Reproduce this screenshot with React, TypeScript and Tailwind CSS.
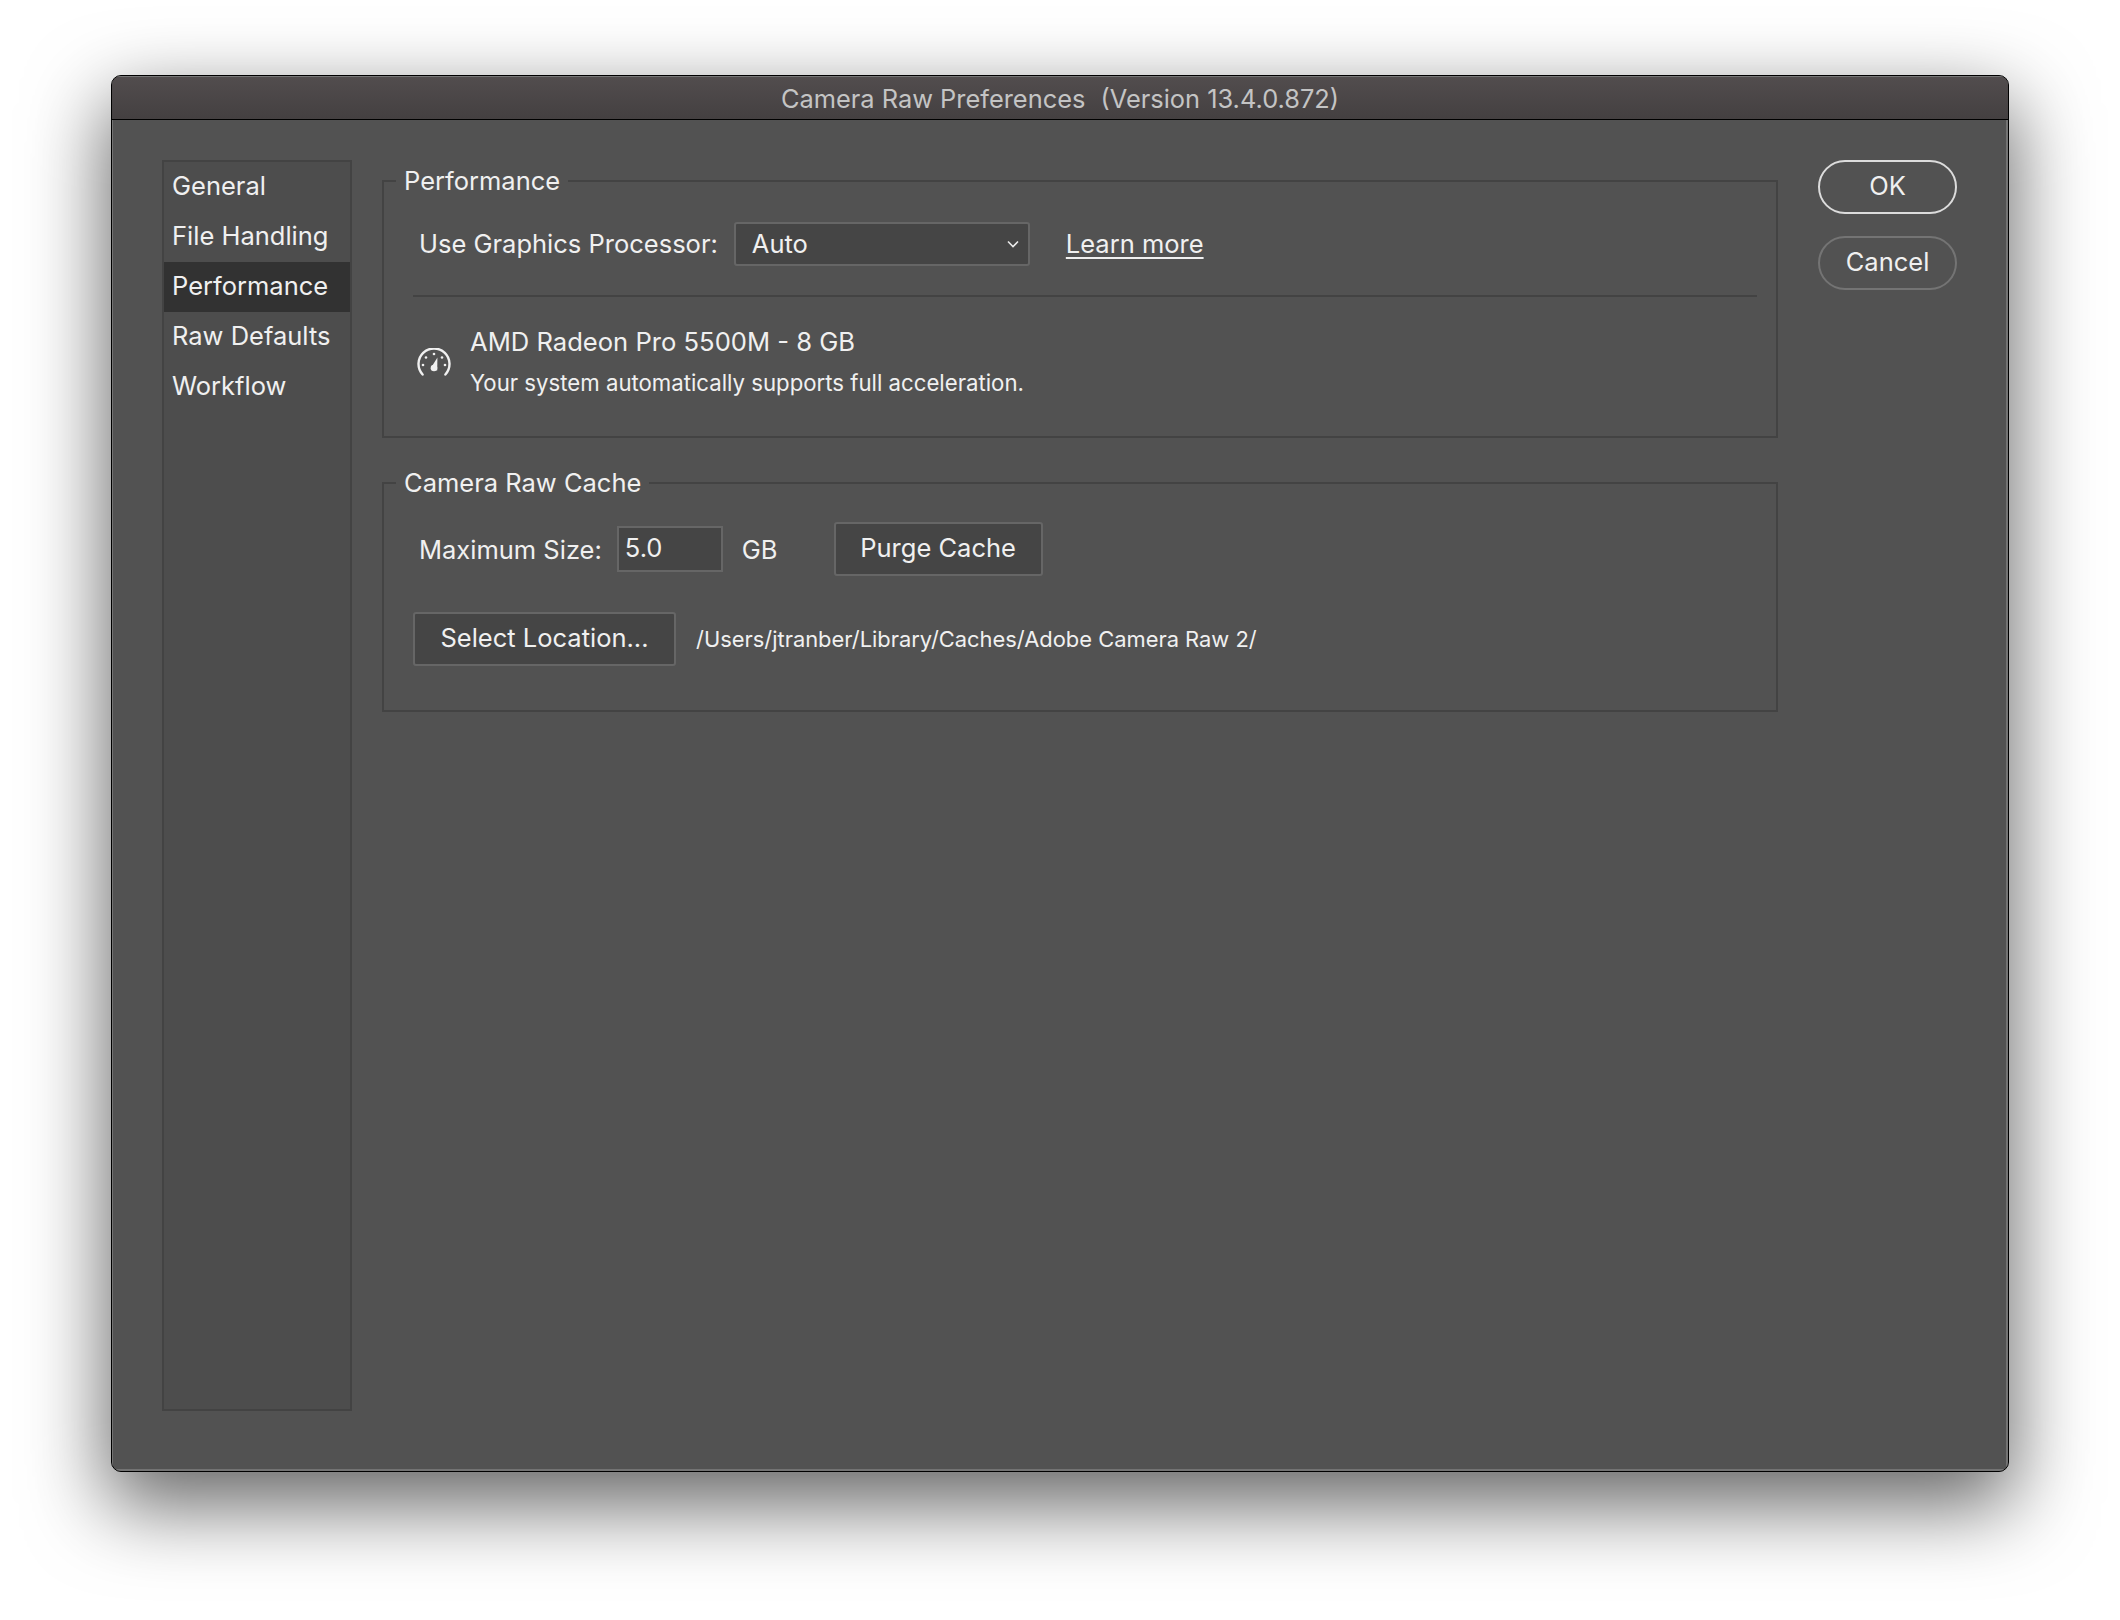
const font = "font-['Inter','Noto_Sans',sans-serif]";

const navItems = ["General", "File Handling", "Performance", "Raw Defaults", "Workflow"];

export default function App() {
  return (
    <div className={`h-[1620px] w-[2120px] overflow-hidden bg-white pl-[111px] pt-[75px] ${font} text-[#f0f0f0]`}>
      <div className="flex h-[1397px] w-[1898px] flex-col overflow-hidden rounded-[10px] border border-black bg-[#525252] shadow-[0_30px_80px_4px_rgba(0,0,0,0.6)]">
        <TitleBar />
        <div className="flex min-h-0 flex-1 pl-[50px] pt-[40px] shadow-[inset_1px_0_0_#737373,inset_-2px_0_0_#737373,inset_0_-2px_0_#737373]">
          <Sidebar />
          <main className="ml-[30px] flex w-[1396px] flex-col gap-[26px] pt-[2px]">
            <PerformanceGroup />
            <CacheGroup />
          </main>
          <div className="ml-[40px] flex w-[139px] flex-col gap-[22px]">
            <button className="h-[54px] rounded-full border-2 border-[#dcdcdc] pb-[1px] text-[25.5px]">OK</button>
            <button className="h-[54px] rounded-full border-2 border-[#747474] pb-[1px] text-[25.5px]">Cancel</button>
          </div>
        </div>
      </div>
    </div>
  );
}

function TitleBar() {
  return (
    <div className="flex h-[44px] shrink-0 items-center justify-center border-b border-black bg-gradient-to-b from-[#524d4e] to-[#444041] pt-[3px] text-[25.4px] text-[#c4c4c4] shadow-[inset_0_1px_0_#777]">
      <span className="mr-[15px]">Camera Raw Preferences</span>
      <span>(Version 13.4.0.872)</span>
    </div>
  );
}

function Sidebar() {
  return (
    <nav className="h-[1251px] w-[190px] border-2 border-[#434343] bg-[#4d4d4d]">
      {navItems.map((item) => (
        <div
          key={item}
          className={`flex h-[50px] items-center pb-[1px] pl-[8px] text-[25.5px] ${item === "Performance" ? "bg-[#323232]" : ""}`}
        >
          {item}
        </div>
      ))}
    </nav>
  );
}

function Group({ title, height, children }: { title: string; height: string; children: React.ReactNode }) {
  return (
    <fieldset className={`border-2 border-[#434343] ${height}`}>
      <legend className="ml-[12px] h-[38px] px-[8px] text-[25.5px] leading-[38px]">{title}</legend>
      {children}
    </fieldset>
  );
}

function PerformanceGroup() {
  return (
    <Group title="Performance" height="h-[276px]">
      <div className="flex items-center pl-[35px] pt-[22px]">
        <span className="mr-[16px] text-[25.5px]">Use Graphics Processor:</span>
        <div className="flex h-[44px] w-[296px] items-center justify-between rounded-[3px] border-2 border-[#666] bg-[#454545] pl-[16px] pr-[8px] text-[25.5px]">
          Auto
          <svg width="14" height="10" viewBox="0 0 14 10" fill="none" stroke="#e8e8e8" strokeWidth="1.6">
            <path d="M2 2.5 7 7.5 12 2.5" />
          </svg>
        </div>
        <a className="ml-[36px] text-[25.5px] underline underline-offset-[4px]">Learn more</a>
      </div>
      <div className="ml-[29px] mr-[19px] mt-[29px] h-[2px] bg-[#434343]" />
      <div className="flex items-center pl-[33px] pt-[29px]">
        <GaugeIcon />
        <div className="ml-[19px]">
          <div className="text-[25.6px] leading-[32px]">AMD Radeon Pro 5500M - 8 GB</div>
          <div className="mt-[10px] text-[22.2px] leading-[30px]">Your system automatically supports full acceleration.</div>
        </div>
      </div>
    </Group>
  );
}

function CacheGroup() {
  return (
    <Group title="Camera Raw Cache" height="h-[248px]">
      <div className="flex items-center pl-[35px] pt-[20px]">
        <span className="pt-[2px] text-[25.5px]">Maximum Size:</span>
        <div className="ml-[15px] flex h-[46px] w-[106px] items-center border-2 border-[#666] bg-[#454545] pb-[2px] pl-[6px] text-[25.5px]">5.0</div>
        <span className="ml-[19px] pt-[2px] text-[25.5px]">GB</span>
        <DialogButton className="ml-[56px] w-[209px]">Purge Cache</DialogButton>
      </div>
      <div className="flex items-center pl-[29px] pt-[36px]">
        <DialogButton className="w-[263px]">Select Location...</DialogButton>
        <span className="ml-[20px] text-[21.9px]">/Users/jtranber/Library/Caches/Adobe Camera Raw 2/</span>
      </div>
    </Group>
  );
}

function DialogButton({ className, children }: { className: string; children: React.ReactNode }) {
  return (
    <button className={`h-[54px] rounded-[3px] border-2 border-[#666] bg-[#454545] pb-[2px] text-[25.5px] ${className}`}>
      {children}
    </button>
  );
}

function GaugeIcon() {
  return (
    <svg width="34" height="28" viewBox="0 0 34 28" fill="none" stroke="#f0f0f0" strokeWidth="2.4" strokeLinecap="round">
      <path d="M5.6 26.5A15.5 15.5 0 1 1 28.4 26.5" />
      <path d="M13.6 20.5 20.4 9.5 20.2 22.5Z" fill="#f0f0f0" stroke="none" />
      <circle cx="17" cy="20" r="3.3" fill="#f0f0f0" stroke="none" />
      <g fill="#f0f0f0" stroke="none">
        <circle cx="6" cy="17" r="1.3" />
        <circle cx="9" cy="9.5" r="1.3" />
        <circle cx="17" cy="6" r="1.3" />
        <circle cx="25" cy="9.5" r="1.3" />
        <circle cx="28" cy="17" r="1.3" />
      </g>
    </svg>
  );
}
